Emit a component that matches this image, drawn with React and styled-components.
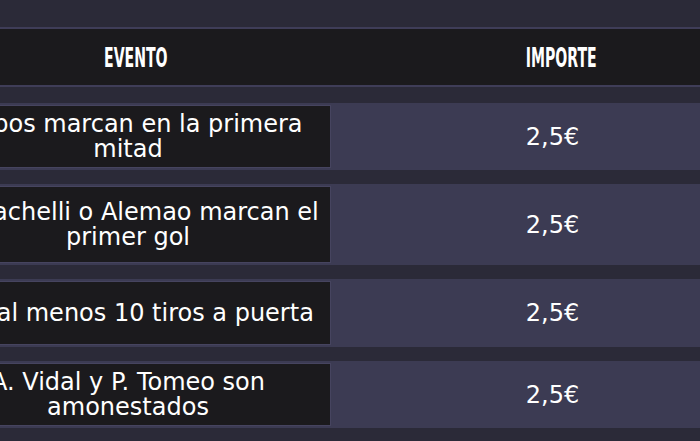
import React from "react";
import styled, { createGlobalStyle } from "styled-components";

const GlobalStyle = createGlobalStyle`
  html, body {
    margin: 0;
    padding: 0;
    background: #2b2a38;
    overflow: hidden;
  }
`;

// the table is wider than the window and is shown cut off on the left
const rows = [
  { evento: "Ambos marcan en la primera mitad", importe: "2,5€", h: 67 },
  { evento: "Bernachelli o Alemao marcan el primer gol", importe: "2,5€", h: 81 },
  { evento: "Hay al menos 10 tiros a puerta", importe: "2,5€", h: 68 },
  { evento: "A. Vidal y P. Tomeo son amonestados", importe: "2,5€", h: 67 },
];

const App = () => {
  return (
    <>
      <GlobalStyle />
      <Page>
        <Table>
          <HeadRow>
            <HeadCell offset={16}>
              <HeadLabel>Evento</HeadLabel>
            </HeadCell>
            <HeadCell offset={0}>
              <HeadLabel>Importe</HeadLabel>
            </HeadCell>
          </HeadRow>
          <Body>
            {rows.map((r, i) => (
              <Row key={i} h={r.h}>
                <EventCell>
                  <EventText>{r.evento}</EventText>
                </EventCell>
                <AmountCell>{r.importe}</AmountCell>
              </Row>
            ))}
          </Body>
        </Table>
      </Page>
    </>
  );
};

const Page = styled.div`
  width: 700px;
  height: 441px;
  overflow: hidden;
  padding-top: 27px;
  box-sizing: border-box;
`;

const Table = styled.div`
  width: 867px;
  margin-left: -75px;
  display: flex;
  flex-direction: column;
`;

const HeadRow = styled.div`
  display: grid;
  grid-template-columns: 406px 1fr;
  height: 56px;
  background: #1b1a1d;
  border-top: 2px solid #3f3d58;
  border-bottom: 2px solid #3f3d58;
`;

const HeadCell = styled.div`
  display: flex;
  align-items: center;
  justify-content: center;
  padding-left: ${(p) => p.offset}px;
`;

const HeadLabel = styled.span`
  display: inline-block;
  color: #ffffff;
  font-family: "DejaVu Sans Condensed", "DejaVu Sans", sans-serif;
  font-weight: 700;
  font-size: 27px;
  line-height: 1;
  text-transform: uppercase;
  transform: scaleX(0.58);
`;

const Body = styled.div`
  display: flex;
  flex-direction: column;
  gap: 14px;
  padding-top: 16px;
`;

const Row = styled.div`
  display: grid;
  grid-template-columns: 406px 1fr;
  height: ${(p) => p.h}px;
  background: #3c3b53;
`;

const EventCell = styled.div`
  margin: 2px 0;
  background: #1b1a1d;
  border: 1px solid #46445f;
  display: flex;
  align-items: center;
  justify-content: center;
  padding: 0 6px;
`;

const EventText = styled.div`
  color: #ffffff;
  font-family: "DejaVu Sans", sans-serif;
  font-size: 24px;
  line-height: 25px;
  text-align: center;
`;

const AmountCell = styled.div`
  display: flex;
  align-items: center;
  justify-content: center;
  padding-right: 18px;
  color: #ffffff;
  font-family: "DejaVu Sans", sans-serif;
  font-size: 24px;
`;

export default App;
